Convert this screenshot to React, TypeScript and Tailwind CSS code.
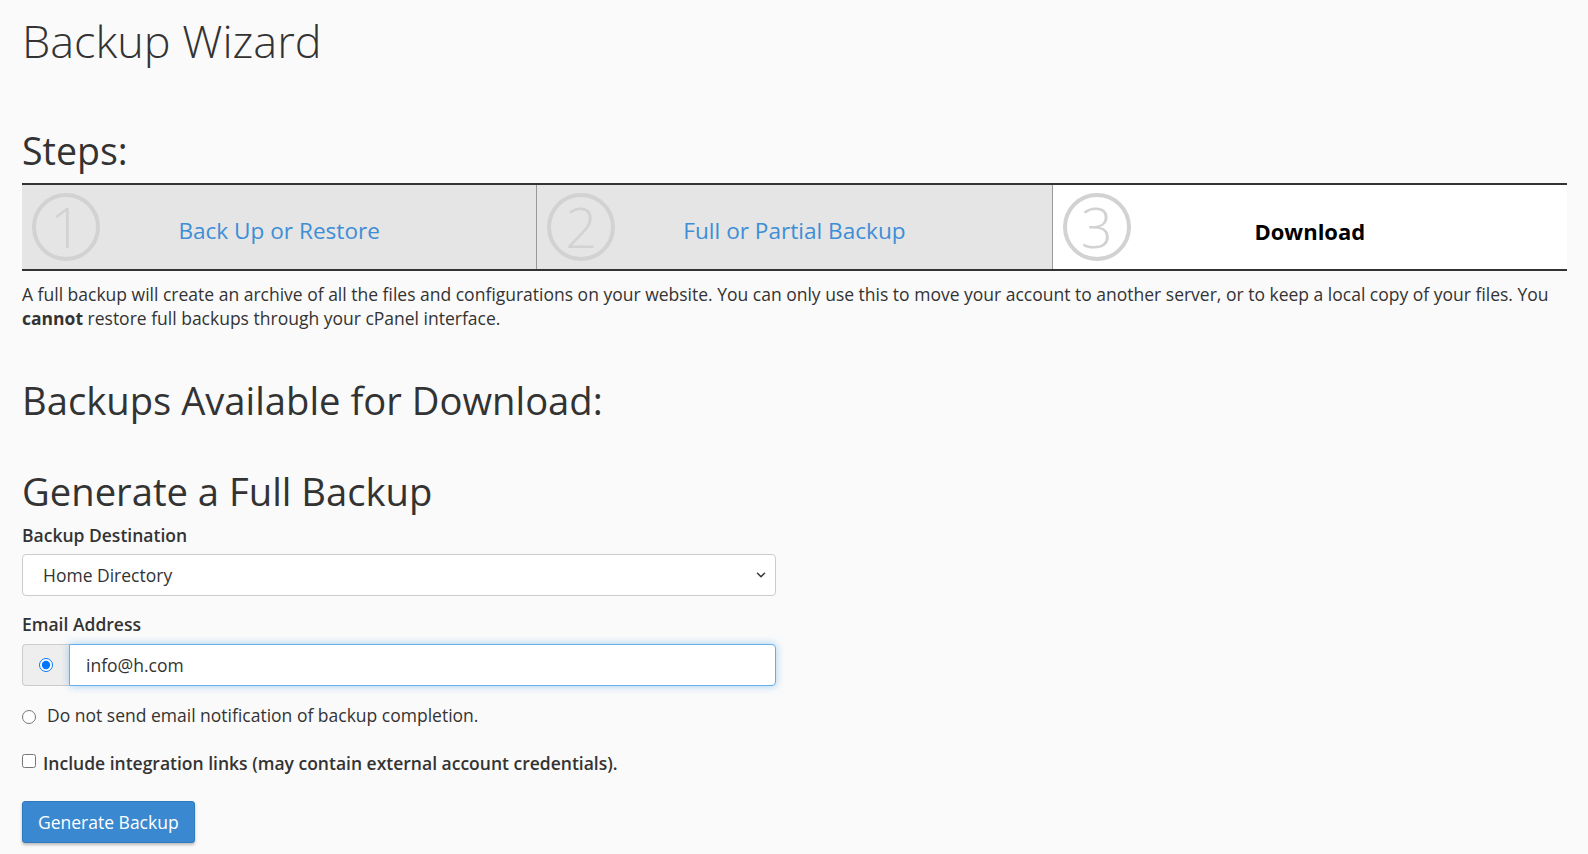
import { ChevronDown } from "lucide-react";

const steps = [
  { n: "1", label: "Back Up or Restore", active: false },
  { n: "2", label: "Full or Partial Backup", active: false },
  { n: "3", label: "Download", active: true },
];

// circled step number, a CSS ring with the digit inside
function StepNumber({ n }: { n: string }) {
  return (
    <div className="absolute left-[10px] top-1/2 flex h-[68px] w-[68px] -translate-y-1/2 items-center justify-center rounded-full border-[4.5px] border-[#d2d2d2]">
      <span className="-mt-[2px] text-[56px] font-light leading-none text-[#d2d2d2]">{n}</span>
    </div>
  );
}

export default function App() {
  return (
    <div className="min-h-screen bg-[#fafafa] pl-[22px] pr-[21px] pb-6 font-['Open_Sans',sans-serif] text-[#333]">
      <h1 className="pt-[13px] text-[45px] font-light leading-[56px]">Backup Wizard</h1>

      <h2 className="mt-[60px] text-[37.5px] font-medium leading-[44px]">Steps:</h2>

      {/* wizard steps */}
      <div className="mt-[10px] flex h-[88px] border-y-2 border-[#333]">
        {steps.map((s, i) => (
          <div
            key={s.n}
            className={`relative flex flex-1 items-center justify-center pt-[8px] ${
              s.active ? "bg-white" : "bg-[#e5e5e5]"
            } ${i > 0 ? "border-l border-[#999]" : ""}`}
          >
            <StepNumber n={s.n} />
            {s.active ? (
              <span className="text-[22px] font-bold text-black">{s.label}</span>
            ) : (
              <a href="#" className="text-[22.6px] text-[#3d8ed6]">
                {s.label}
              </a>
            )}
          </div>
        ))}
      </div>

      <p className="mt-[11px] text-[17.5px] leading-[24px]">
        A full backup will create an archive of all the files and configurations on your website. You can only use this
        to move your account to another server, or to keep a local copy of your files. You <b>cannot</b> restore full
        backups through your cPanel interface.
      </p>

      <h2 className="mt-[47px] text-[38.2px] font-medium leading-[46px]">Backups Available for Download:</h2>

      <h2 className="mt-[45px] text-[38.2px] font-medium leading-[46px]">Generate a Full Backup</h2>

      <label className="mt-[9px] block text-[17.5px] font-semibold leading-[24px]">Backup Destination</label>
      <div className="relative mt-[7px] w-[754px]">
        <select className="h-[42px] w-full appearance-none rounded-[4px] border border-[#ccc] bg-white pl-[20px] text-[17.5px] text-[#333] outline-none">
          <option>Home Directory</option>
        </select>
        <ChevronDown className="pointer-events-none absolute right-[8px] top-1/2 h-[14px] w-[14px] -translate-y-1/2 text-[#333]" strokeWidth={2.5} />
      </div>

      <label className="mt-[16px] block text-[17.5px] font-semibold leading-[24px]">Email Address</label>
      <div className="mt-[8px] flex h-[42px] w-[754px]">
        <span className="flex w-[47px] shrink-0 items-center justify-center rounded-l-[4px] border border-r-0 border-[#ccc] bg-[#eee]">
          <input type="radio" name="email" defaultChecked className="h-[14px] w-[14px]" />
        </span>
        <input
          type="text"
          defaultValue="info@h.com"
          className="min-w-0 flex-1 rounded-r-[4px] border border-[#66afe9] bg-white px-[16px] text-[17.5px] text-[#333] shadow-[0_0_8px_rgba(102,175,233,0.6)] outline-none"
        />
      </div>

      <label className="mt-[17px] flex items-center gap-[11px] text-[17.5px] leading-[24px]">
        <input type="radio" name="email" className="mt-[4px] h-[14px] w-[14px]" />
        Do not send email notification of backup completion.
      </label>

      <label className="mt-[24px] flex items-center gap-[7px] text-[17.5px] font-semibold leading-[24px]">
        <input type="checkbox" className="-mt-[4px] h-[14px] w-[14px]" />
        Include integration links (may contain external account credentials).
      </label>

      <button
        type="button"
        className="mt-[26px] h-[42px] rounded-[3px] border border-[#2f79bd] bg-[#3a89d0] px-[15px] text-[17.5px] text-white shadow-[0_2px_3px_rgba(0,0,0,0.25)]"
      >
        Generate Backup
      </button>
    </div>
  );
}
